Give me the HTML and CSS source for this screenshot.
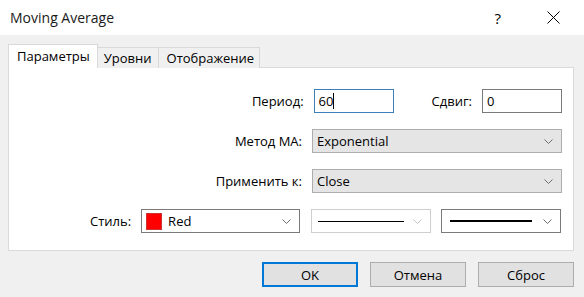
FILE: index.html
```html
<!DOCTYPE html>
<html lang="ru">
<head>
    <meta charset="UTF-8">
    <title>Moving Average</title>
    <link rel="stylesheet" href="styles.css">
</head>
<body>
    <div class="titlebar">
        <span class="title">Moving Average</span>
        <span class="help">?</span>
        <svg class="close" width="13" height="13" viewBox="0 0 13 13">
            <path d="M0.5 0.5 L12.5 12.5 M12.5 0.5 L0.5 12.5" stroke="#000" stroke-width="1" fill="none"/>
        </svg>
    </div>

    <div class="content">
        <!-- вкладки -->
        <div class="tabs">
            <div class="tab active">Параметры</div>
            <div class="tab">Уровни</div>
            <div class="tab">Отображение</div>
        </div>

        <div class="panel">
            <div class="row">
                <label class="label">Период:</label>
                <div class="field focus">60<span class="caret"></span></div>
                <label class="label shift">Сдвиг:</label>
                <div class="field">0</div>
            </div>

            <div class="row">
                <label class="label">Метод MA:</label>
                <div class="combo wide">
                    <span>Exponential</span>
                    <svg class="arrow" width="9" height="5" viewBox="0 0 9 5"><path d="M0.5 0.5 L4.5 4.5 L8.5 0.5" stroke="#6d6d6d" fill="none"/></svg>
                </div>
            </div>

            <div class="row">
                <label class="label">Применить к:</label>
                <div class="combo wide">
                    <span>Close</span>
                    <svg class="arrow" width="9" height="5" viewBox="0 0 9 5"><path d="M0.5 0.5 L4.5 4.5 L8.5 0.5" stroke="#6d6d6d" fill="none"/></svg>
                </div>
            </div>

            <div class="row style-row">
                <label class="label">Стиль:</label>
                <div class="pick color">
                    <span class="swatch"></span>
                    <span class="pick-text">Red</span>
                    <svg class="arrow" width="9" height="5" viewBox="0 0 9 5"><path d="M0.5 0.5 L4.5 4.5 L8.5 0.5" stroke="#6d6d6d" fill="none"/></svg>
                </div>
                <div class="pick line-pick disabled">
                    <span class="line thin"></span>
                    <svg class="arrow" width="9" height="5" viewBox="0 0 9 5"><path d="M0.5 0.5 L4.5 4.5 L8.5 0.5" stroke="#c4c4c4" fill="none"/></svg>
                </div>
                <div class="pick line-pick">
                    <span class="line thick"></span>
                    <svg class="arrow" width="9" height="5" viewBox="0 0 9 5"><path d="M0.5 0.5 L4.5 4.5 L8.5 0.5" stroke="#6d6d6d" fill="none"/></svg>
                </div>
            </div>
        </div>

        <!-- кнопки -->
        <div class="buttons">
            <button class="btn default">OK</button>
            <button class="btn">Отмена</button>
            <button class="btn">Сброс</button>
        </div>
    </div>
</body>
</html>
```

FILE: styles.css
```css
body {
    margin: 0;
    background-color: #f0f0f0;
    font-family: "Open Sans", "Noto Sans", sans-serif;
    font-size: 13px;
    color: #000;
}

.titlebar {
    height: 35px;
    background-color: #fff;
    display: flex;
    align-items: center;
}

.title {
    margin-left: 10px;
    font-size: 14px;
    color: #1a1a1a;
    flex: 1;
}

.help {
    font-size: 15px;
    margin-right: 46px;
}

.close {
    margin-right: 24px;
}

.content {
    padding: 9px 0 0 8px;
    width: 566px;
}

.tabs {
    display: flex;
    align-items: flex-end;
    margin-bottom: -1px;
}

.tab {
    height: 20px;
    line-height: 20px;
    padding: 0 6px;
    border: 1px solid #d9d9d9;
    border-bottom: none;
    margin-left: -1px;
    background-color: #f0f0f0;
}

.tab.active {
    height: 23px;
    line-height: 23px;
    padding: 0 7px 0 8px;
    margin-left: 0;
    background-color: #fff;
    position: relative;
    z-index: 1;
}

.tab:last-child {
    padding: 0 5px 0 8px;
}

.panel {
    background-color: #fff;
    border: 1px solid #d9d9d9;
    padding: 21px 11px 17px 0;
    display: flex;
    flex-direction: column;
    gap: 16px;
}

.row {
    display: flex;
    justify-content: flex-end;
    align-items: center;
    height: 24px;
}

.label {
    margin-right: 10px;
}

.label.shift {
    margin-left: 38px;
}

.field {
    box-sizing: border-box;
    width: 80px;
    height: 24px;
    border: 1px solid #7a7a7a;
    padding: 0 4px;
    line-height: 22px;
    display: flex;
    align-items: center;
}

.field.focus {
    border-color: #3d80b8;
}

.caret {
    width: 1px;
    height: 16px;
    background-color: #000;
}

.combo {
    box-sizing: border-box;
    height: 24px;
    background-color: #e5e5e5;
    border: 1px solid #adadad;
    padding: 0 8px 0 4px;
    display: flex;
    align-items: center;
    justify-content: space-between;
}

.combo.wide {
    width: 250px;
}

.style-row {
    justify-content: flex-start;
    padding-left: 81px;
}

.pick {
    box-sizing: border-box;
    height: 24px;
    background-color: #fff;
    border: 1px solid #7a7a7a;
    display: flex;
    align-items: center;
    padding: 0 8px 0 4px;
}

.pick.color {
    width: 159px;
}

.pick.line-pick {
    width: 120px;
    margin-left: 10px;
    padding-left: 8px;
}

.pick.disabled {
    border-color: #cfcfcf;
    margin-left: 11px;
    padding-left: 6px;
}

.swatch {
    box-sizing: border-box;
    width: 16px;
    height: 17px;
    background-color: #f00;
    border: 1px solid #c33;
}

.pick-text {
    margin-left: 6px;
    flex: 1;
}

.line {
    flex: none;
    background-color: #000;
    margin-right: auto;
}

.line.thin {
    width: 86px;
    height: 1px;
}

.line.thick {
    width: 82px;
    height: 2px;
}

.buttons {
    display: flex;
    justify-content: flex-end;
    gap: 12px;
    margin-top: 11px;
}

.btn {
    box-sizing: border-box;
    width: 96px;
    height: 25px;
    background-color: #e1e1e1;
    border: 1px solid #adadad;
    font-family: inherit;
    font-size: 13px;
    color: #000;
    padding: 0;
}

.btn.default {
    border: 2px solid #0078d7;
}
```
